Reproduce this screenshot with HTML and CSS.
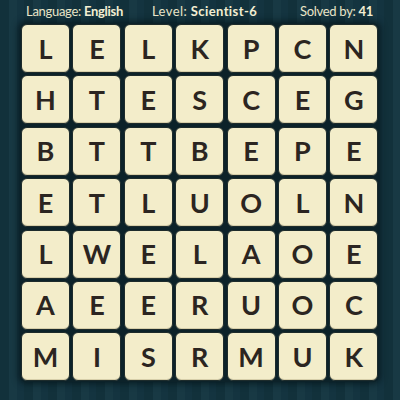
FILE: index.html
```html
<!DOCTYPE html>
<html>
<head>
<meta charset="utf-8">
<link rel="stylesheet" href="styles.css">
</head>
<body>
<div class="page">
  <div class="header">
    <div class="cell c1">Language: <b>English</b></div>
    <div class="cell c2">Level: <b>Scientist-6</b></div>
    <div class="cell c3">Solved by: <b>41</b></div>
  </div>
  <div class="board">
    <div class="tile">L</div><div class="tile">E</div><div class="tile">L</div><div class="tile">K</div><div class="tile">P</div><div class="tile">C</div><div class="tile">N</div>
    <div class="tile">H</div><div class="tile">T</div><div class="tile">E</div><div class="tile">S</div><div class="tile">C</div><div class="tile">E</div><div class="tile">G</div>
    <div class="tile">B</div><div class="tile">T</div><div class="tile">T</div><div class="tile">B</div><div class="tile">E</div><div class="tile">P</div><div class="tile">E</div>
    <div class="tile">E</div><div class="tile">T</div><div class="tile">L</div><div class="tile">U</div><div class="tile">O</div><div class="tile">L</div><div class="tile">N</div>
    <div class="tile">L</div><div class="tile">W</div><div class="tile">E</div><div class="tile">L</div><div class="tile">A</div><div class="tile">O</div><div class="tile">E</div>
    <div class="tile">A</div><div class="tile">E</div><div class="tile">E</div><div class="tile">R</div><div class="tile">U</div><div class="tile">O</div><div class="tile">C</div>
    <div class="tile">M</div><div class="tile">I</div><div class="tile">S</div><div class="tile">R</div><div class="tile">M</div><div class="tile">U</div><div class="tile">K</div>
  </div>
</div>
</body>
</html>
```
FILE: styles.css
```css
html, body {
  margin: 0;
  padding: 0;
}
body {
  width: 400px;
  height: 400px;
  overflow: hidden;
  background-color: #153541;
  background-image: repeating-linear-gradient(90deg, #12313b 0px, #12313b 9px, #183944 9px, #183944 17px, #143440 17px, #143440 24px);
  font-family: "Lato", "Open Sans", sans-serif;
}
.page {
  width: 400px;
  height: 400px;
}
.header {
  display: flex;
  height: 22px;
  padding-left: 26px;
  align-items: center;
  color: #e9e4c7;
  font-size: 13px;
}
.header b {
  font-weight: 700;
  color: #f3eed2;
}
.c1 { width: 126px; letter-spacing: -0.3px; }
.c2 { width: 148px; letter-spacing: 0.4px; }
.c3 { flex: 1; letter-spacing: -0.3px; }
.board {
  margin-left: 20px;
  margin-top: 1px;
  width: 359px;
  padding: 1px;
  display: grid;
  grid-template-columns: repeat(7, 49px);
  grid-auto-rows: 49px;
  gap: 2.4px;
  background: #0c2229;
  border-radius: 6px;
  box-shadow: 0 0 6px 2px rgba(6, 22, 27, 0.75);
  box-sizing: border-box;
}
.tile {
  background: #f3edca;
  border-radius: 6px;
  border: 1px solid #1d2b2b;
  box-sizing: border-box;
  box-shadow: inset 0 -1px 0 rgba(160, 150, 110, 0.35);
  display: flex;
  align-items: center;
  justify-content: center;
  font-weight: 700;
  font-size: 27px;
  color: #2b2521;
  padding-bottom: 1px;
}
```
